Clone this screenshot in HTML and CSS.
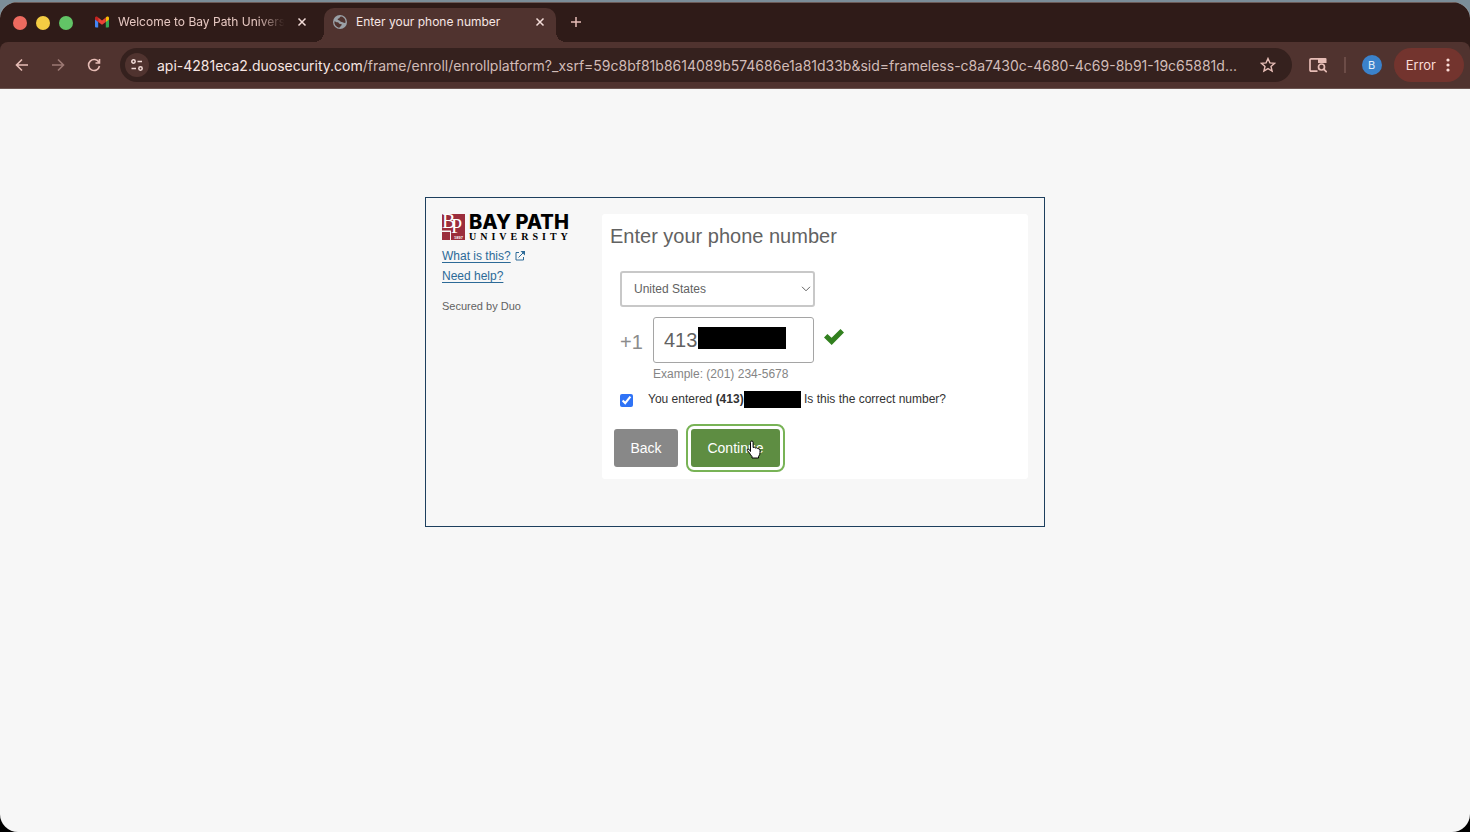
FILE: index.html
```html
<!DOCTYPE html>
<html lang="en">
<head>
    <meta charset="UTF-8">
    <meta name="viewport" content="width=device-width, initial-scale=1.0">
    <title>Enter your phone number</title>
    <link rel="stylesheet" href="styles.css">
</head>
<body>
    <div class="window">
        <header class="browser">
            <div class="tab-strip">
                <div class="lights">
                    <span class="light red"></span>
                    <span class="light yellow"></span>
                    <span class="light green"></span>
                </div>
                <div class="tab">
                    <svg class="favicon" width="14" height="14" viewBox="0 0 14 14">
                        <path d="M0 3.500v8Q0 12.500 1 12.500h2.200V6z" fill="#4285f4"/>
                        <path d="M14 3.500v8q0 1-1 1h-2.200V6z" fill="#34a853"/>
                        <path d="M10.800 2.500 12 1.600Q14 .8 14 3v1.500l-3.200 2.400z" fill="#fbbc04"/>
                        <path d="M0 4.500V3Q0 .8 2 1.600l1.200.9v4.400z" fill="#c5221f"/>
                        <path d="M3.200 2.500 7 5.400l3.800-2.900v4.400L7 9.800 3.200 6.900z" fill="#ea4335"/>
                    </svg>
                    <span class="tab-title fade">Welcome to Bay Path Univers</span>
                    <button class="tab-close" aria-label="Close tab">
                        <svg width="10" height="10" viewBox="0 0 10 10"><path d="M1.500 1.500l7 7M8.500 1.500l-7 7"/></svg>
                    </button>
                </div>
                <div class="tab active">
                    <svg class="favicon" width="14" height="14" viewBox="0 0 14 14">
                        <circle cx="7" cy="7" r="7" fill="#9aa0a6"/>
                        <path d="M8.500 1.400C6.300 1.600 7 3.200 5.500 3.500 4.200 3.800 4.500 5 5.800 5.200 7.500 5.500 7 7 8.800 7c1.700 0 1.500 1.400 3.700.8.500-3.200-1.400-5.600-4-6.400z" fill="#50332f"/>
                        <path d="M1.300 6.500C1.200 9.500 3 12 5.800 12.700 8 12.500 7 11 8.300 10.600 9.500 10 8.700 8.900 7.300 9 5.500 9 6.200 7.300 4.500 7.200 3 7.200 2.600 6.200 1.300 6.500z" fill="#50332f"/>
                    </svg>
                    <span class="tab-title">Enter your phone number</span>
                    <button class="tab-close" aria-label="Close tab">
                        <svg width="10" height="10" viewBox="0 0 10 10"><path d="M1.500 1.500l7 7M8.500 1.500l-7 7"/></svg>
                    </button>
                </div>
                <button class="new-tab" aria-label="New tab">
                    <svg width="12" height="12" viewBox="0 0 12 12"><path d="M6 1v10M1 6h10"/></svg>
                </button>
            </div>

            <div class="toolbar">
                <button class="nav-button" aria-label="Back">
                    <svg width="14" height="14" viewBox="0 0 14 14"><path d="M13 7H1.500M7 1.500 1.500 7 7 12.500"/></svg>
                </button>
                <button class="nav-button disabled" aria-label="Forward">
                    <svg width="14" height="14" viewBox="0 0 14 14"><path d="M1 7h11.500M7 1.500 12.500 7 7 12.500"/></svg>
                </button>
                <button class="nav-button" aria-label="Reload">
                    <svg width="14" height="14" viewBox="0 0 14 14"><path d="M12 4.500A5.500 5.500 0 1 0 12.500 8M12.500 1v4H8.500"/></svg>
                </button>
                <div class="omnibox">
                    <button class="site-info" aria-label="View site information">
                        <svg width="14" height="14" viewBox="0 0 14 14"><circle cx="3.500" cy="3.500" r="1.700"/><path d="M7.500 3.500H12M1.500 10.500H6"/><circle cx="10.500" cy="10.500" r="1.700"/></svg>
                    </button>
                    <div class="url"><span class="host">api-4281eca2.duosecurity.com</span>/frame/enroll/enrollplatform?_xsrf=59c8bf81b8614089b574686e1a81d33b&amp;sid=frameless-c8a7430c-4680-4c69-8b91-19c65881d...</div>
                    <button class="star" aria-label="Bookmark this tab">
                        <svg width="16" height="16" viewBox="0 0 16 16"><path d="M8 1.500l1.900 4.400 4.700.4-3.600 3.100 1.100 4.700L8 11.600l-4.100 2.500L5 9.400 1.400 6.300l4.700-.4z"/></svg>
                    </button>
                </div>
                <button class="search-page" aria-label="Search this page">
                    <svg width="18" height="16" viewBox="0 0 18 16">
                        <path d="M8.500 14.200H2.200Q1 14.200 1 13V3q0-1.200 1.200-1.200h7.300"/>
                        <path class="solid" d="M9 1h7.500q1 0 1 1v4H9z"/>
                        <circle cx="12.500" cy="10" r="3"/>
                        <path d="M14.700 12.200l3 3"/>
                    </svg>
                </button>
                <span class="divider"></span>
                <button class="avatar" aria-label="Profile">B</button>
                <button class="error-pill">
                    Error
                    <svg width="4" height="14" viewBox="0 0 4 14"><circle cx="2" cy="2" r="1.600"/><circle cx="2" cy="7" r="1.600"/><circle cx="2" cy="12" r="1.600"/></svg>
                </button>
            </div>
        </header>

        <main class="page">
            <div class="duo-frame">
                <aside class="sidebar">
                    <div class="logo">
                        <svg class="monogram" width="24" height="26" viewBox="0 0 24 26">
                            <path d="M0 0h23v16.500H0zM0 18h8v8H0zM9 16h14v10H9z" fill="#9b2d3c"/>
                            <text x="0" y="14" class="mono-letter">B</text>
                            <text x="9" y="19" class="mono-letter">P</text>
                            <text x="12" y="25" class="mono-year">1897</text>
                        </svg>
                        <div class="wordmark">
                            <span class="wordmark-name">BAY PATH</span>
                            <span class="wordmark-sub">UNIVERSITY</span>
                        </div>
                    </div>
                    <div class="side-link">
                        <a href="#">What is this?</a>
                        <svg width="10" height="10" viewBox="0 0 10 10"><path d="M4 1.500H1v7.500h7.500V6M3.500 6.500 8.500 1.500"/><path class="tip" d="M5.500 0H10v4.500z"/></svg>
                    </div>
                    <div class="side-link"><a href="#">Need help?</a></div>
                    <p class="secured">Secured by Duo</p>
                </aside>

                <form class="panel">
                    <h1>Enter your phone number</h1>
                    <div class="select-wrap">
                        <select aria-label="Country">
                            <option>United States</option>
                        </select>
                        <svg class="chevron" width="10" height="6" viewBox="0 0 10 6"><path d="M1 .8l4 4 4-4"/></svg>
                    </div>
                    <div class="phone-row">
                        <label class="prefix" for="phone">+1</label>
                        <div class="phone-field">
                            <input type="tel" id="phone" value="413">
                            <span class="redacted phone-redacted"></span>
                        </div>
                        <svg class="valid" width="20" height="16" viewBox="0 0 20 16"><path d="M0 8.500 3.400 5 7.600 8.800 16.500 0 20 3.400 7.700 16z"/></svg>
                    </div>
                    <p class="example">Example: (201) 234-5678</p>
                    <div class="confirm">
                        <input type="checkbox" id="confirm" checked>
                        <label for="confirm">You entered <strong>(413)</strong><span class="redacted confirm-redacted"></span> Is this the correct number?</label>
                    </div>
                    <div class="buttons">
                        <button type="button" class="btn back">Back</button>
                        <button type="button" class="btn continue">
                            Continue
                            <svg class="pointer" width="16" height="20" viewBox="0 0 16 20"><path d="M4.500 11.500V2.500Q4.500 1 5.800 1T7.100 2.500v5Q8.300 6.600 9.500 8q1.500-.7 2.300.6 2.200-.4 2.200 1.700v2.500q0 2-1.500 3.700V18H6v-1.500Q4.500 15 3.500 13L1.300 10.500Q.8 9.300 2 9t2.500 2.500z"/></svg>
                        </button>
                    </div>
                </form>
            </div>
        </main>
    </div>
</body>
</html>
```

FILE: styles.css
```css
* {
    box-sizing: border-box;
}
body {
    margin: 0;
    background: linear-gradient(#7b8d98, #7b8d98 40px, #000 80px);
    font-family: "Liberation Sans", Arial, sans-serif;
}
button {
    padding: 0;
    border: 0;
    background: none;
    font-family: inherit;
}
svg {
    display: block;
    flex: none;
}
.window {
    display: flex;
    flex-direction: column;
    min-height: 100vh;
    border-top: 2px solid #7b8d98;
    border-radius: 18px;
    background: #f7f7f7;
    overflow: hidden;
}

/* browser bar */
.browser {
    background: #2f1b18;
    border-top: 1px solid #6c5a57;
    font-family: Inter, sans-serif;
    color: #f3dcd8;
}
.browser svg {
    fill: none;
    stroke: #e7bdb6;
    stroke-width: 2;
}
.browser .favicon {
    stroke: none;
}
.tab-strip {
    display: flex;
    align-items: center;
    height: 39px;
    padding-left: 13px;
}
.lights {
    display: flex;
    gap: 9px;
    margin-right: 13px;
}
.light {
    width: 14px;
    height: 14px;
    border-radius: 50%;
}
.red {
    background: #ed6a5f;
}
.yellow {
    background: #f4cc43;
}
.green {
    background: #62c466;
}
.tab {
    position: relative;
    display: flex;
    align-items: center;
    gap: 9px;
    width: 238px;
    height: 34px;
    padding: 0 17px 7px 9px;
    align-self: flex-end;
    font-size: 12px;
    color: #e7c8c2;
}
.tab.active {
    width: 232px;
    padding-right: 11px;
    background: #50332f;
    border-radius: 10px 10px 0 0;
    color: #f7e6e3;
}
.tab.active::before,
.tab.active::after {
    content: "";
    position: absolute;
    bottom: 0;
    width: 10px;
    height: 10px;
}
.tab.active::before {
    right: 100%;
    background: radial-gradient(circle at 0 0, #2f1b18 10px, #50332f 10px);
}
.tab.active::after {
    left: 100%;
    background: radial-gradient(circle at 100% 0, #2f1b18 10px, #50332f 10px);
}
.tab-title {
    flex: 1;
    white-space: nowrap;
}
.fade {
    mask-image: linear-gradient(to right, #000 82%, transparent 98%);
}
.tab-close svg {
    stroke: #f3dcd8;
    stroke-width: 1.5;
}
.new-tab {
    margin-left: 14px;
    padding-bottom: 1px;
}
.new-tab svg {
    stroke-width: 1.5;
}
.toolbar {
    display: flex;
    align-items: center;
    height: 47px;
    padding: 0 6px 0 15px;
    background: #50332f;
    border-bottom: 1px solid #6b5551;
    border-radius: 8px 8px 0 0;
}
.nav-button {
    margin-right: 22px;
}
.nav-button svg {
    stroke-width: 1.6;
}
.nav-button.disabled {
    opacity: 0.5;
}
.omnibox {
    display: flex;
    flex: 1;
    align-items: center;
    min-width: 0;
    height: 34px;
    margin-left: -3px;
    padding: 0 16px 0 5px;
    border-radius: 17px;
    background: #35211e;
}
.site-info {
    display: flex;
    align-items: center;
    justify-content: center;
    width: 24px;
    height: 24px;
    margin-right: 8px;
    border-radius: 50%;
    background: #50332f;
}
.site-info svg {
    stroke: #f3dcd8;
    stroke-width: 1.5;
}
.url {
    flex: 1;
    overflow: hidden;
    white-space: nowrap;
    font-size: 14px;
    color: #d2bcb8;
}
.host {
    color: #f7e6e3;
}
.star svg {
    stroke-width: 1.4;
}
.search-page {
    margin-left: 17px;
}
.search-page svg {
    stroke-width: 1.7;
}
.search-page .solid {
    fill: #e7bdb6;
    stroke: none;
}
.divider {
    width: 2px;
    height: 16px;
    margin: 0 16px 0 17px;
    background: #6c4c47;
}
.avatar {
    width: 20px;
    height: 20px;
    border-radius: 50%;
    background: #3b82cb;
    color: #e4effa;
    font-size: 11px;
}
.error-pill {
    display: flex;
    align-items: center;
    gap: 10px;
    height: 34px;
    margin-left: 12px;
    padding: 0 14px 0 12px;
    border-radius: 17px;
    background: #73342e;
    color: #fbdcd7;
    font-size: 13px;
}
.error-pill svg {
    fill: #fbdcd7;
    stroke: none;
}

/* enrollment frame */
.page {
    flex: 1;
    padding-top: 108px;
}
.duo-frame {
    display: flex;
    gap: 31px;
    max-width: 620px;
    min-height: 330px;
    margin: 0 auto;
    padding: 16px;
    border: 1px solid #1d3f5e;
    align-items: flex-start;
}
.sidebar {
    width: 129px;
    font-size: 12px;
}
.logo {
    display: flex;
    gap: 3px;
    height: 32px;
}
.mono-letter {
    font: 20px "Liberation Serif", serif;
    fill: #fff;
}
.mono-year {
    font: bold 4px "Liberation Sans", sans-serif;
    fill: #fff;
}
.wordmark {
    color: #000;
    white-space: nowrap;
}
.wordmark span {
    display: block;
}
.wordmark-name {
    font: 800 20px/16px Inter, sans-serif;
}
.wordmark-sub {
    font: bold 10px/13px "Liberation Serif", serif;
    letter-spacing: 4px;
}
.side-link {
    display: flex;
    align-items: center;
    gap: 4px;
    height: 20px;
}
.side-link a {
    color: #2c6a97;
    text-underline-offset: 2px;
}
.side-link svg {
    fill: none;
    stroke: #2c6a97;
}
.side-link .tip {
    fill: #2c6a97;
    stroke: none;
}
.secured {
    margin: 14px 0 0;
    font-size: 11px;
    color: #626262;
}
.panel {
    flex: 1;
    padding: 8px 12px 12px;
    border-radius: 3px;
    background: #fff;
}
h1 {
    margin: 0 0 20px -4px;
    font-size: 20px;
    font-weight: normal;
    line-height: 29px;
    color: #626262;
}
.select-wrap {
    position: relative;
    width: 195px;
    margin-left: 6px;
}
select {
    appearance: none;
    display: block;
    width: 100%;
    height: 36px;
    padding: 0 12px;
    border: 2px solid #c8c8c8;
    border-radius: 3px;
    background: #fff;
    color: #626262;
    font: 12px "Liberation Sans", Arial, sans-serif;
}
.chevron {
    position: absolute;
    top: 15px;
    right: 4px;
    fill: none;
    stroke: #626262;
}
.phone-row {
    display: flex;
    align-items: center;
    margin: 10px 0 0 6px;
}
.prefix {
    width: 33px;
    padding-top: 4px;
    font-size: 20px;
    color: #8c8c8c;
}
.phone-field {
    position: relative;
    width: 161px;
}
.phone-field input {
    display: block;
    width: 100%;
    height: 46px;
    padding: 0 10px;
    border: 1px solid #a5a5a5;
    border-radius: 3px;
    color: #626262;
    font: 20px "Liberation Sans", Arial, sans-serif;
}
.redacted {
    background: #000;
}
.phone-redacted {
    position: absolute;
    top: 10px;
    left: 45px;
    width: 88px;
    height: 22px;
}
.valid {
    margin: 0 0 6px 10px;
    fill: #32801f;
}
.example {
    margin: 3px 0 0 39px;
    font-size: 12px;
    line-height: 16px;
    color: #858585;
}
.confirm {
    display: flex;
    align-items: center;
    margin: 9px 0 0 6px;
    font-size: 12px;
    line-height: 17px;
    color: #333;
}
.confirm input {
    width: 13px;
    height: 13px;
    margin: 2px 15px 0 0;
    accent-color: #2f73f6;
}
.confirm-redacted {
    display: inline-block;
    width: 57px;
    height: 17px;
    vertical-align: middle;
}
.buttons {
    display: flex;
    gap: 13px;
    margin: 21px 0 0 0;
}
.btn {
    position: relative;
    height: 38px;
    padding: 0 16px;
    border-radius: 3px;
    color: #fff;
    font-size: 14px;
}
.back {
    min-width: 64px;
    background: #888;
}
.continue {
    min-width: 89px;
    background: #5e8d42;
    outline: 2px solid #78b356;
    outline-offset: 3px;
}
.pointer {
    position: absolute;
    top: 11px;
    left: 55px;
    fill: #fff;
    stroke: #000;
}
```
